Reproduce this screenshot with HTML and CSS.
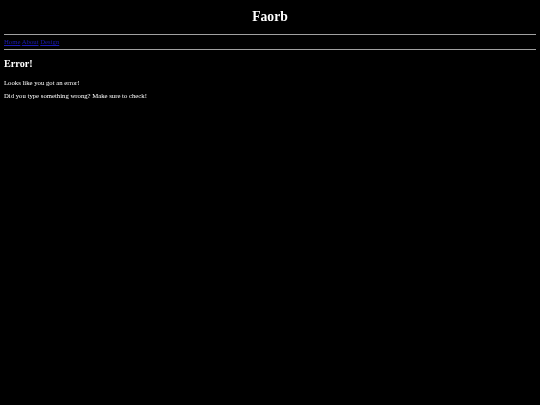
FILE: index.html
```html
<!DOCTYPE html>
<html>
<head>
<meta charset="utf-8">
<title>Faorb</title>
<link rel="stylesheet" href="styles.css">
</head>
<body>
<header class="site-header">
  <h1 class="site-title">Faorb</h1>
  <hr class="rule">
  <nav class="nav">
    <a href="#">Home</a> <a href="#">About</a> <a href="#">Design</a>
  </nav>
  <hr class="rule">
</header>
<main class="content">
  <h2 class="title">Error!</h2>
  <p class="text">Looks like you got an error!</p>
  <p class="text">Did you type something wrong? Make sure to check!</p>
</main>
</body>
</html>
```
FILE: styles.css
```css
html, body {
  background: #000;
}
body {
  margin: 3px 4px;
  color: #fff;
  font-family: "Liberation Serif", "Times New Roman", serif;
  font-size: 6.72px;
  will-change: transform;
}
.site-title {
  text-align: center;
  font-size: 13.6px;
  margin: 6px 0 9px;
  font-weight: bold;
}
.rule {
  border: 0;
  border-top: 1px solid #a0a0a0;
  margin: 3.36px 0;
  height: 0;
}
.nav a {
  color: #1c1cb4;
}
.title {
  font-size: 10.2px;
  margin: 8.37px 0 9.6px;
  font-weight: bold;
}
.text {
  margin: 6.72px 0;
}
```
